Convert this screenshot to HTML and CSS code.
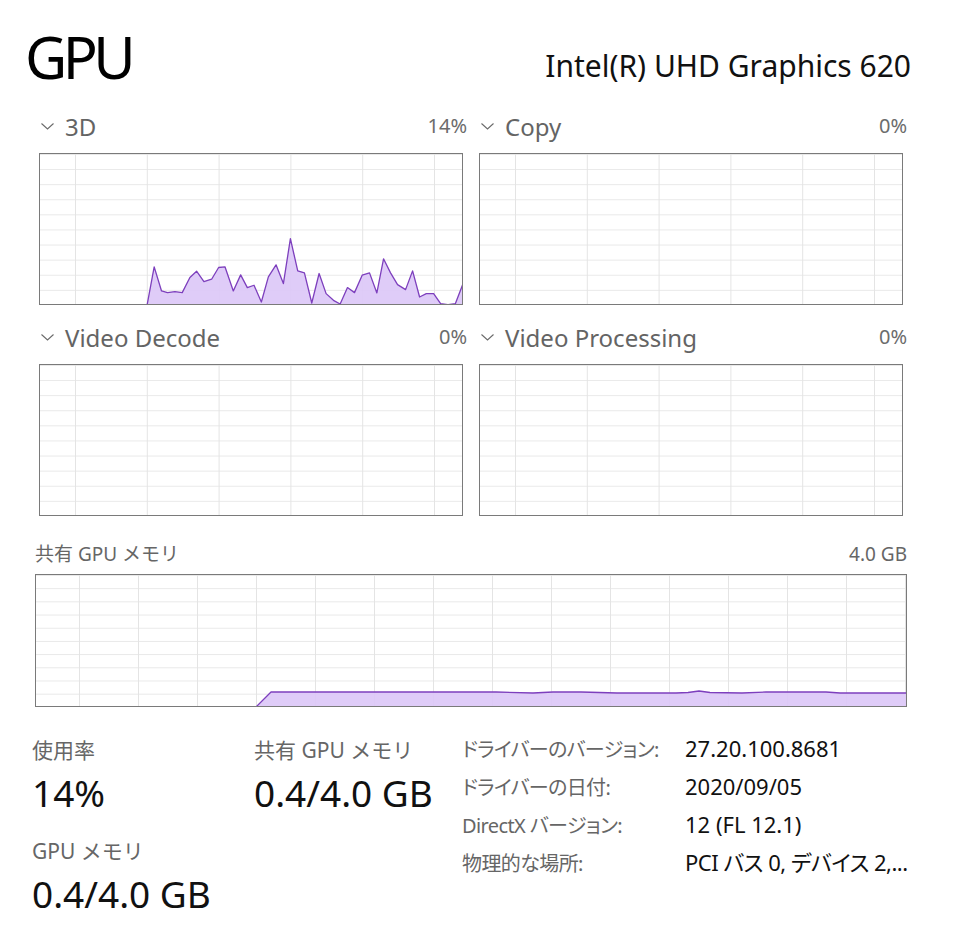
FILE: index.html
```html
<!DOCTYPE html>
<html lang="ja">
<head>
<meta charset="utf-8">
<title>GPU</title>
<link rel="stylesheet" href="styles.css">
</head>
<body>
<div class="page">
  <header class="header">
    <h1 class="title">GPU</h1>
    <div class="device">Intel(R) UHD Graphics 620</div>
  </header>

  <section class="engines">
    <div class="panel">
      <div class="panel-head">
        <div class="panel-name">
          <svg class="chev" viewBox="0 0 13 7" width="13" height="7"><polyline points="0.5,0.5 6.5,6 12.5,0.5" /></svg>
          <span>3D</span>
        </div>
        <span class="pct">14%</span>
      </div>
      <div class="chart">
        <svg class="plot" viewBox="31 43 1264 448" preserveAspectRatio="none">
          <polygon class="fill" points="352,493 373,380 395,452 413,457 435,454 457,457 480,412 500,393 522,424 545,417 566,382 585,380 610,452 632,404 652,442 672,435 694,485 715,410 738,374 760,430 781,296 803,392 823,398 845,488 867,400 888,460 910,480 930,491 952,442 973,457 996,405 1018,398 1040,458 1060,356 1081,398 1102,433 1126,448 1147,392 1168,470 1188,460 1210,460 1231,490 1253,493 1275,490 1297,433 1297,493" />
          <polyline class="line" points="352,493 373,380 395,452 413,457 435,454 457,457 480,412 500,393 522,424 545,417 566,382 585,380 610,452 632,404 652,442 672,435 694,485 715,410 738,374 760,430 781,296 803,392 823,398 845,488 867,400 888,460 910,480 930,491 952,442 973,457 996,405 1018,398 1040,458 1060,356 1081,398 1102,433 1126,448 1147,392 1168,470 1188,460 1210,460 1231,490 1253,493 1275,490 1297,433" />
        </svg>
      </div>
    </div>

    <div class="panel">
      <div class="panel-head">
        <div class="panel-name">
          <svg class="chev" viewBox="0 0 13 7" width="13" height="7"><polyline points="0.5,0.5 6.5,6 12.5,0.5" /></svg>
          <span>Copy</span>
        </div>
        <span class="pct">0%</span>
      </div>
      <div class="chart"></div>
    </div>

    <div class="panel">
      <div class="panel-head">
        <div class="panel-name">
          <svg class="chev" viewBox="0 0 13 7" width="13" height="7"><polyline points="0.5,0.5 6.5,6 12.5,0.5" /></svg>
          <span>Video Decode</span>
        </div>
        <span class="pct">0%</span>
      </div>
      <div class="chart"></div>
    </div>

    <div class="panel">
      <div class="panel-head">
        <div class="panel-name">
          <svg class="chev" viewBox="0 0 13 7" width="13" height="7"><polyline points="0.5,0.5 6.5,6 12.5,0.5" /></svg>
          <span>Video Processing</span>
        </div>
        <span class="pct">0%</span>
      </div>
      <div class="chart"></div>
    </div>
  </section>

  <section class="memory">
    <div class="memory-head">
      <span>共有 GPU メモリ</span>
      <span>4.0 GB</span>
    </div>
    <div class="chart chart-mem">
      <svg class="plot" viewBox="0 0 870 131" preserveAspectRatio="none">
        <polygon class="fill" points="220,132 235,117 460,117 497,118 517,117 545,117 581,118 640,118 652,117.5 663,116 674,117.5 706,118 730,117 790,117 804,118 870,118 870,132" />
        <polyline class="line" points="220,132 235,117 460,117 497,118 517,117 545,117 581,118 640,118 652,117.5 663,116 674,117.5 706,118 730,117 790,117 804,118 870,118" />
      </svg>
    </div>
  </section>

  <section class="stats">
    <div class="stat-col stat-col-1">
      <div class="stat">
        <div class="stat-label">使用率</div>
        <div class="stat-value">14%</div>
      </div>
      <div class="stat stat-next">
        <div class="stat-label">GPU メモリ</div>
        <div class="stat-value">0.4/4.0 GB</div>
      </div>
    </div>
    <div class="stat-col stat-col-2">
      <div class="stat">
        <div class="stat-label">共有 GPU メモリ</div>
        <div class="stat-value">0.4/4.0 GB</div>
      </div>
    </div>
    <div class="info">
      <div class="info-label">ドライバーのバージョン:</div>
      <div class="info-value">27.20.100.8681</div>
      <div class="info-label">ドライバーの日付:</div>
      <div class="info-value">2020/09/05</div>
      <div class="info-label">DirectX バージョン:</div>
      <div class="info-value">12 (FL 12.1)</div>
      <div class="info-label">物理的な場所:</div>
      <div class="info-value info-value-jp">PCI バス 0, デバイス 2,...</div>
    </div>
  </section>
</div>
</body>
</html>
```

FILE: styles.css
```css
* { box-sizing: border-box; }

html, body {
  margin: 0;
  padding: 0;
  background: #ffffff;
}

body {
  font-family: "Noto Sans", "Noto Sans CJK JP", sans-serif;
  color: #111111;
}

.page {
  width: 954px;
  height: 952px;
  overflow: hidden;
}

.header {
  display: flex;
  justify-content: space-between;
  align-items: flex-start;
  height: 87px;
  padding: 27px 43px 0 25px;
}

.title {
  margin: 0;
  font-size: 58px;
  line-height: 60px;
  font-weight: 400;
  letter-spacing: -4.5px;
  color: #000000;
}

.device {
  margin-top: 19px;
  font-size: 30px;
  line-height: 40px;
  color: #111111;
}

.engines {
  display: grid;
  grid-template-columns: 424px 424px;
  column-gap: 16px;
  row-gap: 13px;
  padding: 20px 0 0 39px;
}

.panel {
  display: flex;
  flex-direction: column;
  gap: 14px;
}

.panel-head {
  display: flex;
  justify-content: space-between;
  align-items: flex-start;
  height: 32px;
  margin-right: -4px;
}

.panel-name {
  display: flex;
  align-items: center;
  gap: 11px;
  margin-top: 4px;
  padding-left: 2px;
  font-size: 24px;
  line-height: 32px;
  color: #646464;
}

.chev {
  display: block;
  margin-top: -1px;
  fill: none;
  stroke: #6a6a6a;
  stroke-width: 1.1;
}

.pct {
  margin-top: 3px;
  font-size: 20px;
  line-height: 32px;
  color: #6c6c6c;
}

.chart {
  height: 152px;
  border: 1px solid #7a7a7a;
  background-color: #ffffff;
  background-image:
    linear-gradient(to right, #e4e4e4 1px, transparent 1px),
    linear-gradient(to bottom, #e8e8e8 1px, transparent 1px);
  background-size: 71.8px 100%, 100% 15.1px;
  background-position: 35px 0, 0 0;
  overflow: hidden;
}

.chart-mem {
  height: 133px;
  background-size: 59px 100%, 100% 13.2px;
  background-position: 43px 0, 0 0;
}

.plot {
  display: block;
  width: 100%;
  height: 100%;
}

.plot .fill {
  fill: #dcc8f7;
  fill-opacity: 0.92;
  stroke: none;
}

.plot .line {
  fill: none;
  stroke: #7d3fbd;
  stroke-width: 1.3;
  vector-effect: non-scaling-stroke;
  stroke-linejoin: round;
}

.memory {
  padding: 25px 47px 0 35px;
}

.memory-head {
  display: flex;
  justify-content: space-between;
  align-items: baseline;
  font-size: 19px;
  line-height: 26px;
  color: #666666;
  margin-bottom: 7px;
}

.stats {
  display: flex;
  align-items: flex-start;
  padding: 29px 0 0 32px;
}

.stat-col {
  display: flex;
  flex-direction: column;
}

.stat-col-1 { width: 222px; }
.stat-col-2 { width: 208px; }

.stat {
  display: flex;
  flex-direction: column;
  gap: 7px;
}

.stat-next { margin-top: 22px; }

.stat-label {
  font-size: 21px;
  line-height: 28px;
  color: #666666;
}

.stat-value {
  font-size: 37px;
  line-height: 44px;
  color: #111111;
}

.info {
  display: grid;
  grid-template-columns: 223px auto;
  grid-auto-rows: 38px;
  align-items: baseline;
  margin-top: -6px;
  font-size: 20px;
  line-height: 36px;
}

.info-label {
  color: #666666;
  white-space: nowrap;
  letter-spacing: -0.6px;
  font-feature-settings: "palt";
}

.info-value {
  font-size: 22px;
  color: #111111;
  white-space: nowrap;
  font-feature-settings: "palt";
}

.info-value-jp {
  letter-spacing: -0.5px;
}
```
